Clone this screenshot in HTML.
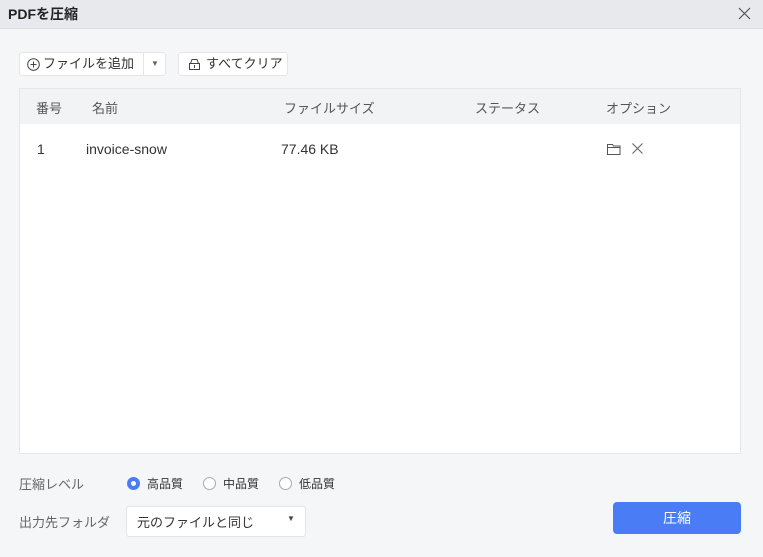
<!DOCTYPE html><html><head><meta charset="utf-8"><style>
*{box-sizing:border-box;margin:0;padding:0}
body{width:763px;height:557px;background:#f5f6f8;font-family:"Liberation Sans","Noto Sans CJK JP",sans-serif;position:relative;overflow:hidden;color:#333}
.a{position:absolute}
.t{font-size:13px;white-space:nowrap}
.btn{position:absolute;background:#fff;border:1px solid #e4e5e8;border-radius:3px;height:24px;font-size:13px;color:#333;line-height:22px}
.rad{position:absolute;width:13px;height:13px;border-radius:50%;border:1px solid #aaa;background:#fff}
</style></head><body>
<div class="a" style="left:0;top:0;width:763px;height:29px;background:#e8e9ec;border-bottom:1px solid #dcdde0"></div>
<div class="a t" style="left:8px;top:4px;font-weight:bold;font-size:14px;color:#222">PDFを圧縮</div>
<svg class="a" style="left:738px;top:7px" width="13" height="13"><path d="M1 1L12 12M12 1L1 12" stroke="#555" stroke-width="1.2"/></svg>

<div class="btn" style="left:19px;top:52px;width:147px">
<svg class="a" style="left:7px;top:5px" width="13" height="13"><circle cx="6.5" cy="6.5" r="5.8" fill="none" stroke="#444"/><path d="M6.5 3.5v6M3.5 6.5h6" stroke="#444"/></svg>
<span class="a" style="left:23px;top:0">ファイルを追加</span>
<div class="a" style="left:123px;top:0;width:1px;height:22px;background:#e4e5e8"></div>
<span class="a" style="left:131px;top:0;font-size:8px;color:#666">▼</span></div>
<div class="btn" style="left:178px;top:52px;width:110px">
<svg class="a" style="left:9px;top:5px" width="13" height="13"><path d="M1.5 5.5h10v6h-10z M2.5 5.5L4 1.5h5l1.5 4 M6.5 7v3" fill="none" stroke="#444"/></svg>
<span class="a" style="left:27px;top:0">すべてクリア</span></div>

<div class="a" style="left:19px;top:88px;width:722px;height:366px;background:#fff;border:1px solid #e6e7ea"></div>
<div class="a" style="left:20px;top:89px;width:720px;height:35px;background:#f2f3f5"></div>
<div class="a t" style="left:36px;top:98px;color:#555">番号</div>
<div class="a t" style="left:92px;top:98px;color:#555">名前</div>
<div class="a t" style="left:284px;top:98px;color:#555">ファイルサイズ</div>
<div class="a t" style="left:475px;top:98px;color:#555">ステータス</div>
<div class="a t" style="left:606px;top:98px;color:#555">オプション</div>
<div class="a t" style="left:37px;top:141px;font-size:14px">1</div>
<div class="a t" style="left:86px;top:141px;font-size:14px">invoice-snow</div>
<div class="a t" style="left:281px;top:141px;font-size:14px">77.46 KB</div>
<svg class="a" style="left:607px;top:143px" width="14" height="12"><path d="M0.5 1.5h5l1 1.5h6.5v8.5h-12.5z M0.5 4.5h12.5" fill="none" stroke="#555"/></svg>
<svg class="a" style="left:632px;top:143px" width="11" height="11"><path d="M0.5 0.5L10.5 10.5M10.5 0.5L0.5 10.5" stroke="#666" stroke-width="1.1"/></svg>

<div class="a t" style="left:19px;top:474px;color:#666">圧縮レベル</div>
<div class="rad" style="left:127px;top:477px;border:4px solid #4a7cf6"></div>
<div class="a t" style="left:147px;top:475px;font-size:12px">高品質</div>
<div class="rad" style="left:203px;top:477px"></div>
<div class="a t" style="left:223px;top:475px;font-size:12px">中品質</div>
<div class="rad" style="left:279px;top:477px"></div>
<div class="a t" style="left:299px;top:475px;font-size:12px">低品質</div>

<div class="a t" style="left:19px;top:512px;color:#666">出力先フォルダ</div>
<div class="a" style="left:126px;top:506px;width:180px;height:31px;background:#fff;border:1px solid #e4e5e8;border-radius:3px"></div>
<div class="a t" style="left:137px;top:512px">元のファイルと同じ</div>
<div class="a" style="left:287px;top:514px;font-size:8px;color:#444">▼</div>
<div class="a" style="left:613px;top:502px;width:128px;height:32px;background:#4a7cf6;border-radius:4px;color:#fff;font-size:14px;text-align:center;line-height:32px">圧縮</div>
</body></html>
